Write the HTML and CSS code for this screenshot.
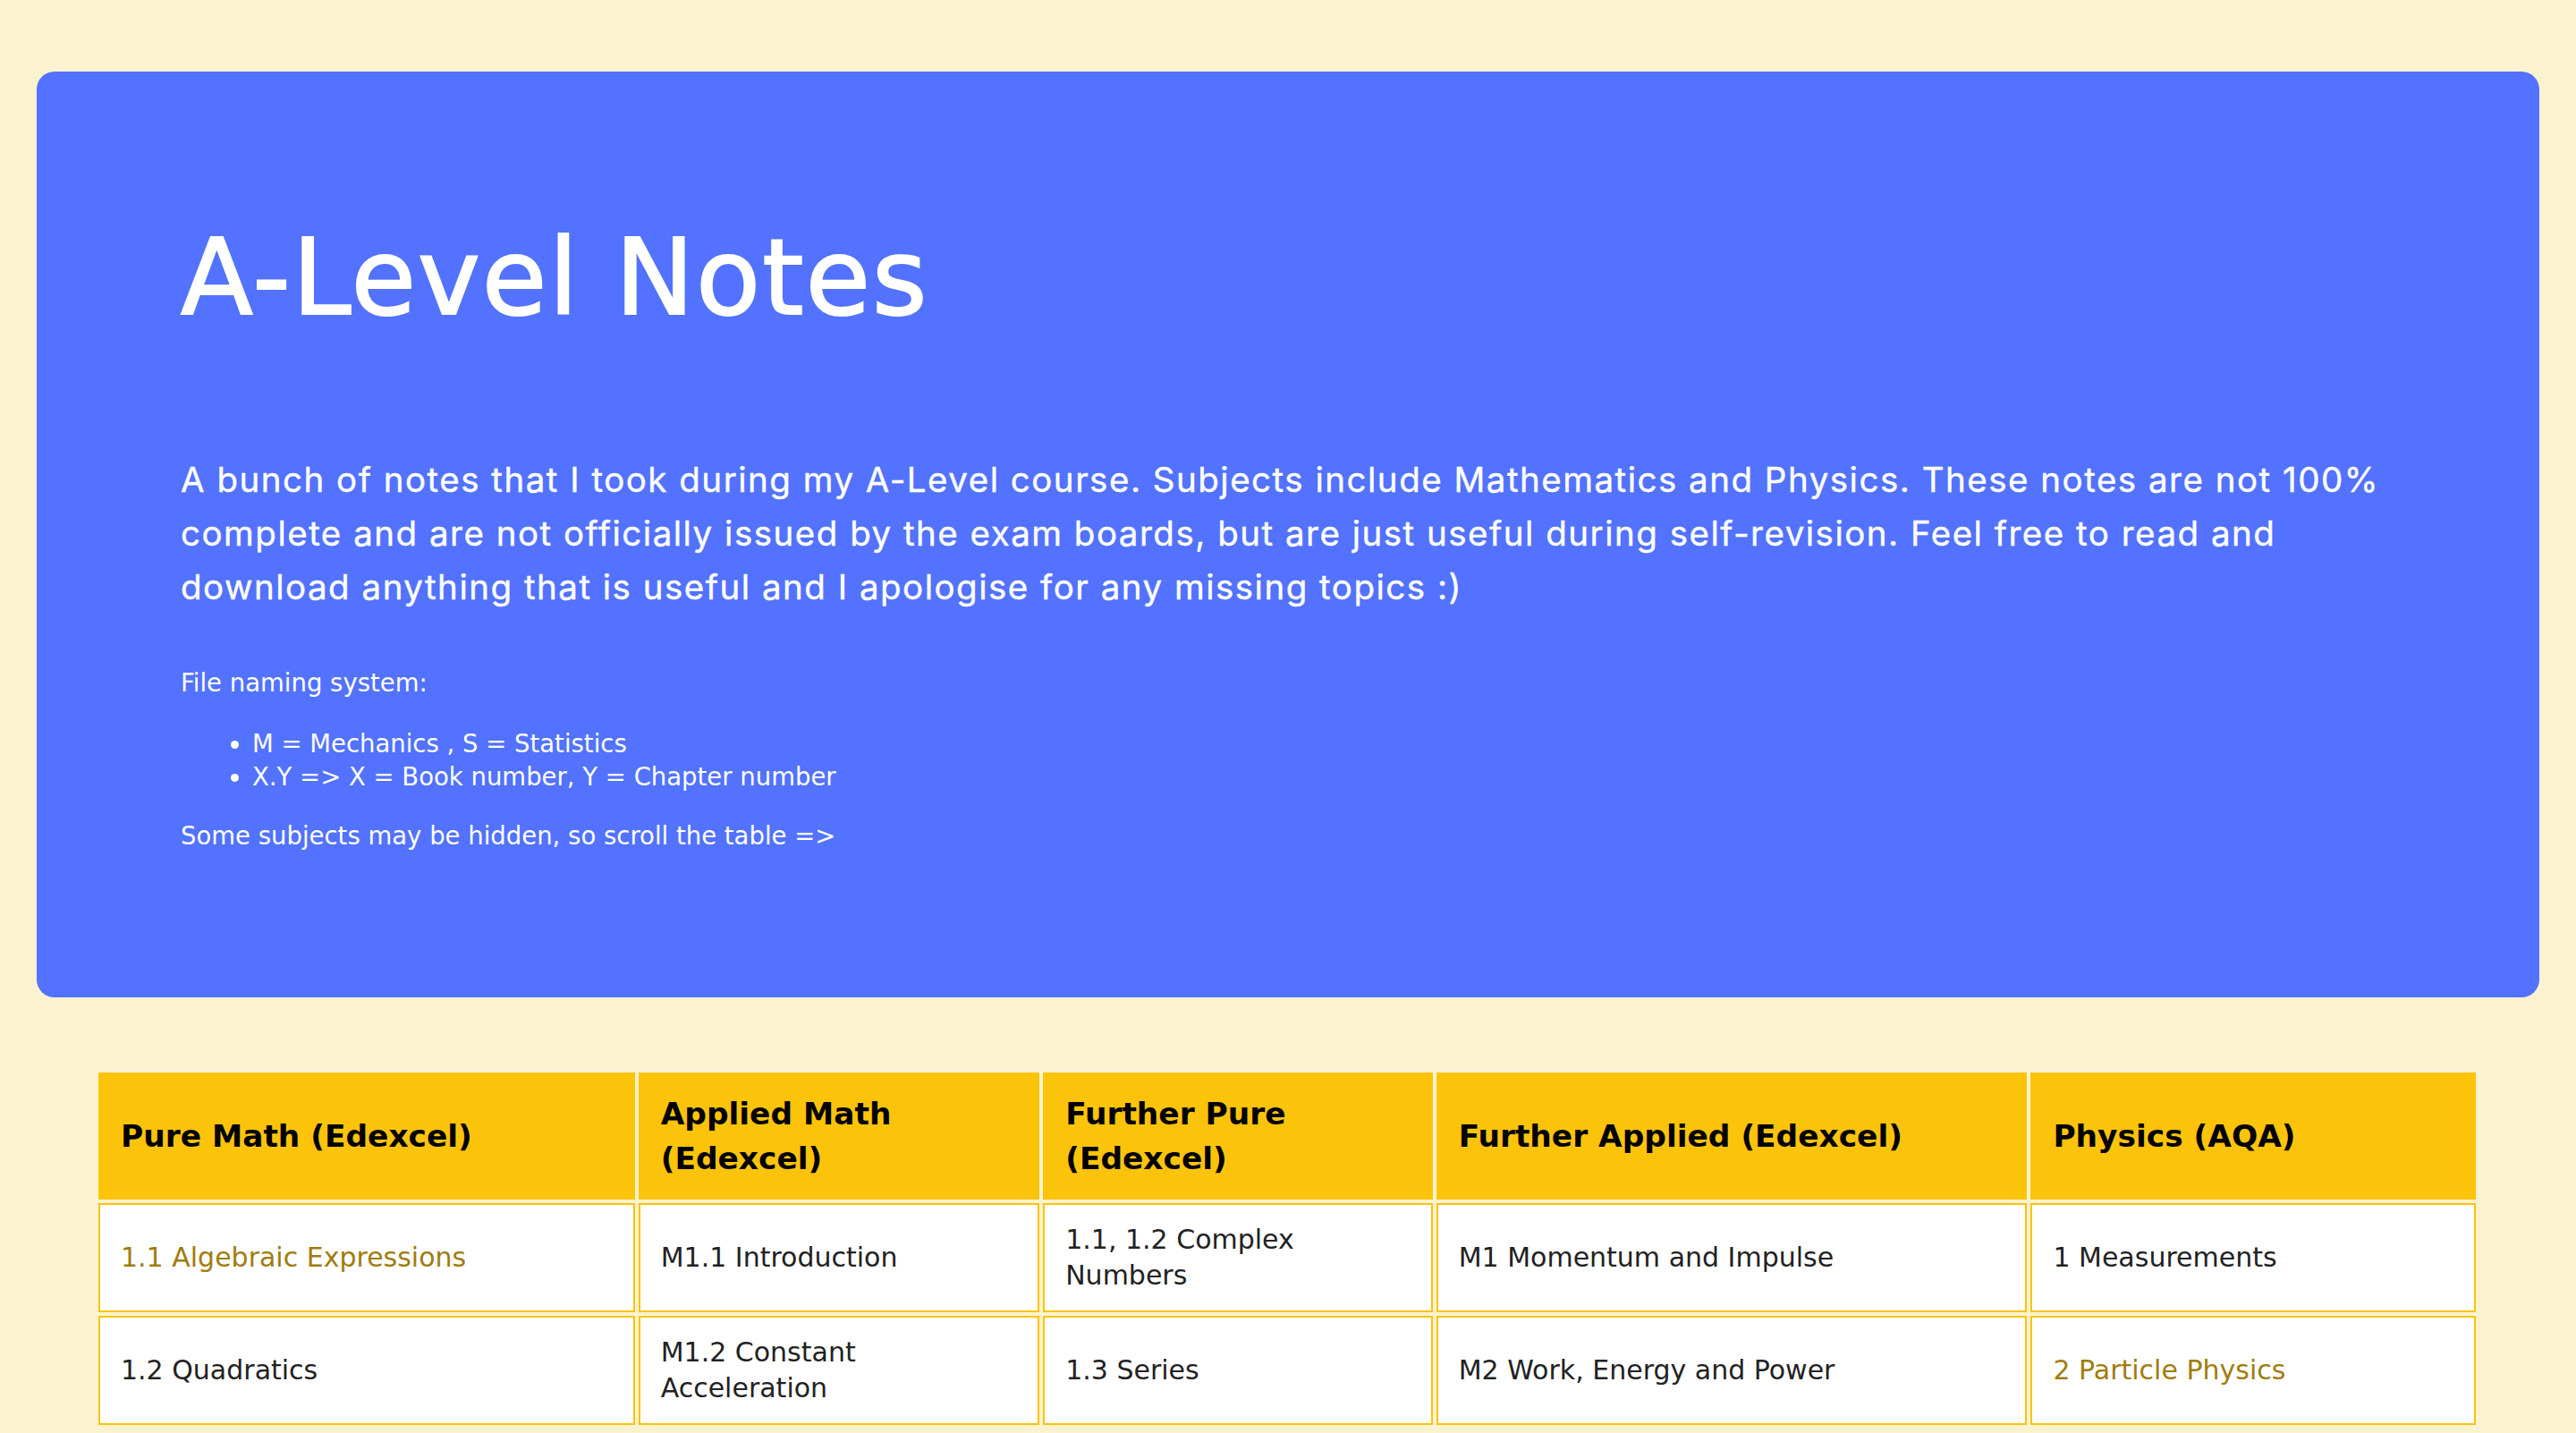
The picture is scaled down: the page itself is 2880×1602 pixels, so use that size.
FILE: index.html
```html
<!DOCTYPE html>
<html lang="en">
<head>
<meta charset="utf-8">
<title>A-Level Notes</title>
<link rel="stylesheet" href="styles.css">
</head>
<body>
  <header class="hero">
    <h1 class="hero-title">A-Level Notes</h1>
    <p class="hero-lead">A bunch of notes that I took during my A-Level course. Subjects include Mathematics and Physics. These notes are not 100% complete and are not officially issued by the exam boards, but are just useful during self-revision. Feel free to read and download anything that is useful and I apologise for any missing topics :)</p>
    <p class="hero-small">File naming system:</p>
    <ul class="hero-list">
      <li>M = Mechanics , S = Statistics</li>
      <li>X.Y =&gt; X = Book number, Y = Chapter number</li>
    </ul>
    <p class="hero-small">Some subjects may be hidden, so scroll the table =&gt;</p>
  </header>

  <main class="table-wrap">
    <table class="notes">
      <colgroup>
        <col class="c1"><col class="c2"><col class="c3"><col class="c4"><col class="c5">
      </colgroup>
      <thead>
        <tr>
          <th>Pure Math (Edexcel)</th>
          <th>Applied Math (Edexcel)</th>
          <th>Further Pure (Edexcel)</th>
          <th>Further Applied (Edexcel)</th>
          <th>Physics (AQA)</th>
        </tr>
      </thead>
      <tbody>
        <tr>
          <td><a class="note-link" href="#">1.1 Algebraic Expressions</a></td>
          <td>M1.1 Introduction</td>
          <td>1.1, 1.2 Complex Numbers</td>
          <td>M1 Momentum and Impulse</td>
          <td>1 Measurements</td>
        </tr>
        <tr>
          <td>1.2 Quadratics</td>
          <td>M1.2 Constant Acceleration</td>
          <td>1.3 Series</td>
          <td>M2 Work, Energy and Power</td>
          <td><a class="note-link" href="#">2 Particle Physics</a></td>
        </tr>
      </tbody>
    </table>
  </main>
</body>
</html>
```

FILE: styles.css
```css
html, body {
  margin: 0;
  padding: 0;
}

body {
  background: #fbf3cf;
  font-family: "DejaVu Sans", "Noto Sans", sans-serif;
  font-variant-ligatures: none;
  color: #222222;
  overflow: hidden;
}

.hero {
  margin: 80px 41px 0;
  padding: 161px 160px 162px 161px;
  background: #5272ff;
  border-radius: 20px;
  color: #ffffff;
}

.hero-title {
  margin: 0;
  font-family: "DejaVu Sans", sans-serif;
  font-weight: 400;
  font-size: 118px;
  line-height: 138px;
  letter-spacing: 2px;
  -webkit-text-stroke: 2px #ffffff;
}

.hero-lead {
  margin: 127px 0 0;
  font-family: "Inter", "Noto Sans", sans-serif;
  font-feature-settings: "calt" 0, "liga" 0;
  font-weight: 400;
  font-size: 38.5px;
  line-height: 60px;
  letter-spacing: 1.5px;
  -webkit-text-stroke: 0.4px #ffffff;
}

.hero-small {
  margin: 59px 0 0;
  font-size: 27.5px;
  line-height: 37px;
}

.hero-list {
  margin: 31px 0 29px;
  padding-left: 80px;
  font-size: 27.5px;
  line-height: 37px;
}

.hero-list + .hero-small {
  margin-top: 0;
}

.table-wrap {
  margin: 80px 0 0 106px;
}

.notes {
  border-collapse: separate;
  border-spacing: 4.5px;
  table-layout: fixed;
  width: 2666px;
}

.c1 { width: 599px; }
.c2 { width: 448px; }
.c3 { width: 435px; }
.c4 { width: 660px; }
.c5 { width: 497px; }

.notes th,
.notes td {
  box-sizing: border-box;
  text-align: left;
  vertical-align: middle;
  border: 2px solid #fcc30b;
}

.notes th {
  background: #fcc30b;
  color: #000000;
  font-weight: 700;
  font-size: 34.4px;
  line-height: 50px;
  padding: 19px 24px 19px 23px;
  height: 142px;
}

.notes td {
  background: #ffffff;
  color: #222222;
  font-size: 30px;
  line-height: 40px;
  padding: 19px 24px 19px 23px;
  height: 122px;
}

.note-link {
  color: #a07c0e;
  text-decoration: none;
}
```
